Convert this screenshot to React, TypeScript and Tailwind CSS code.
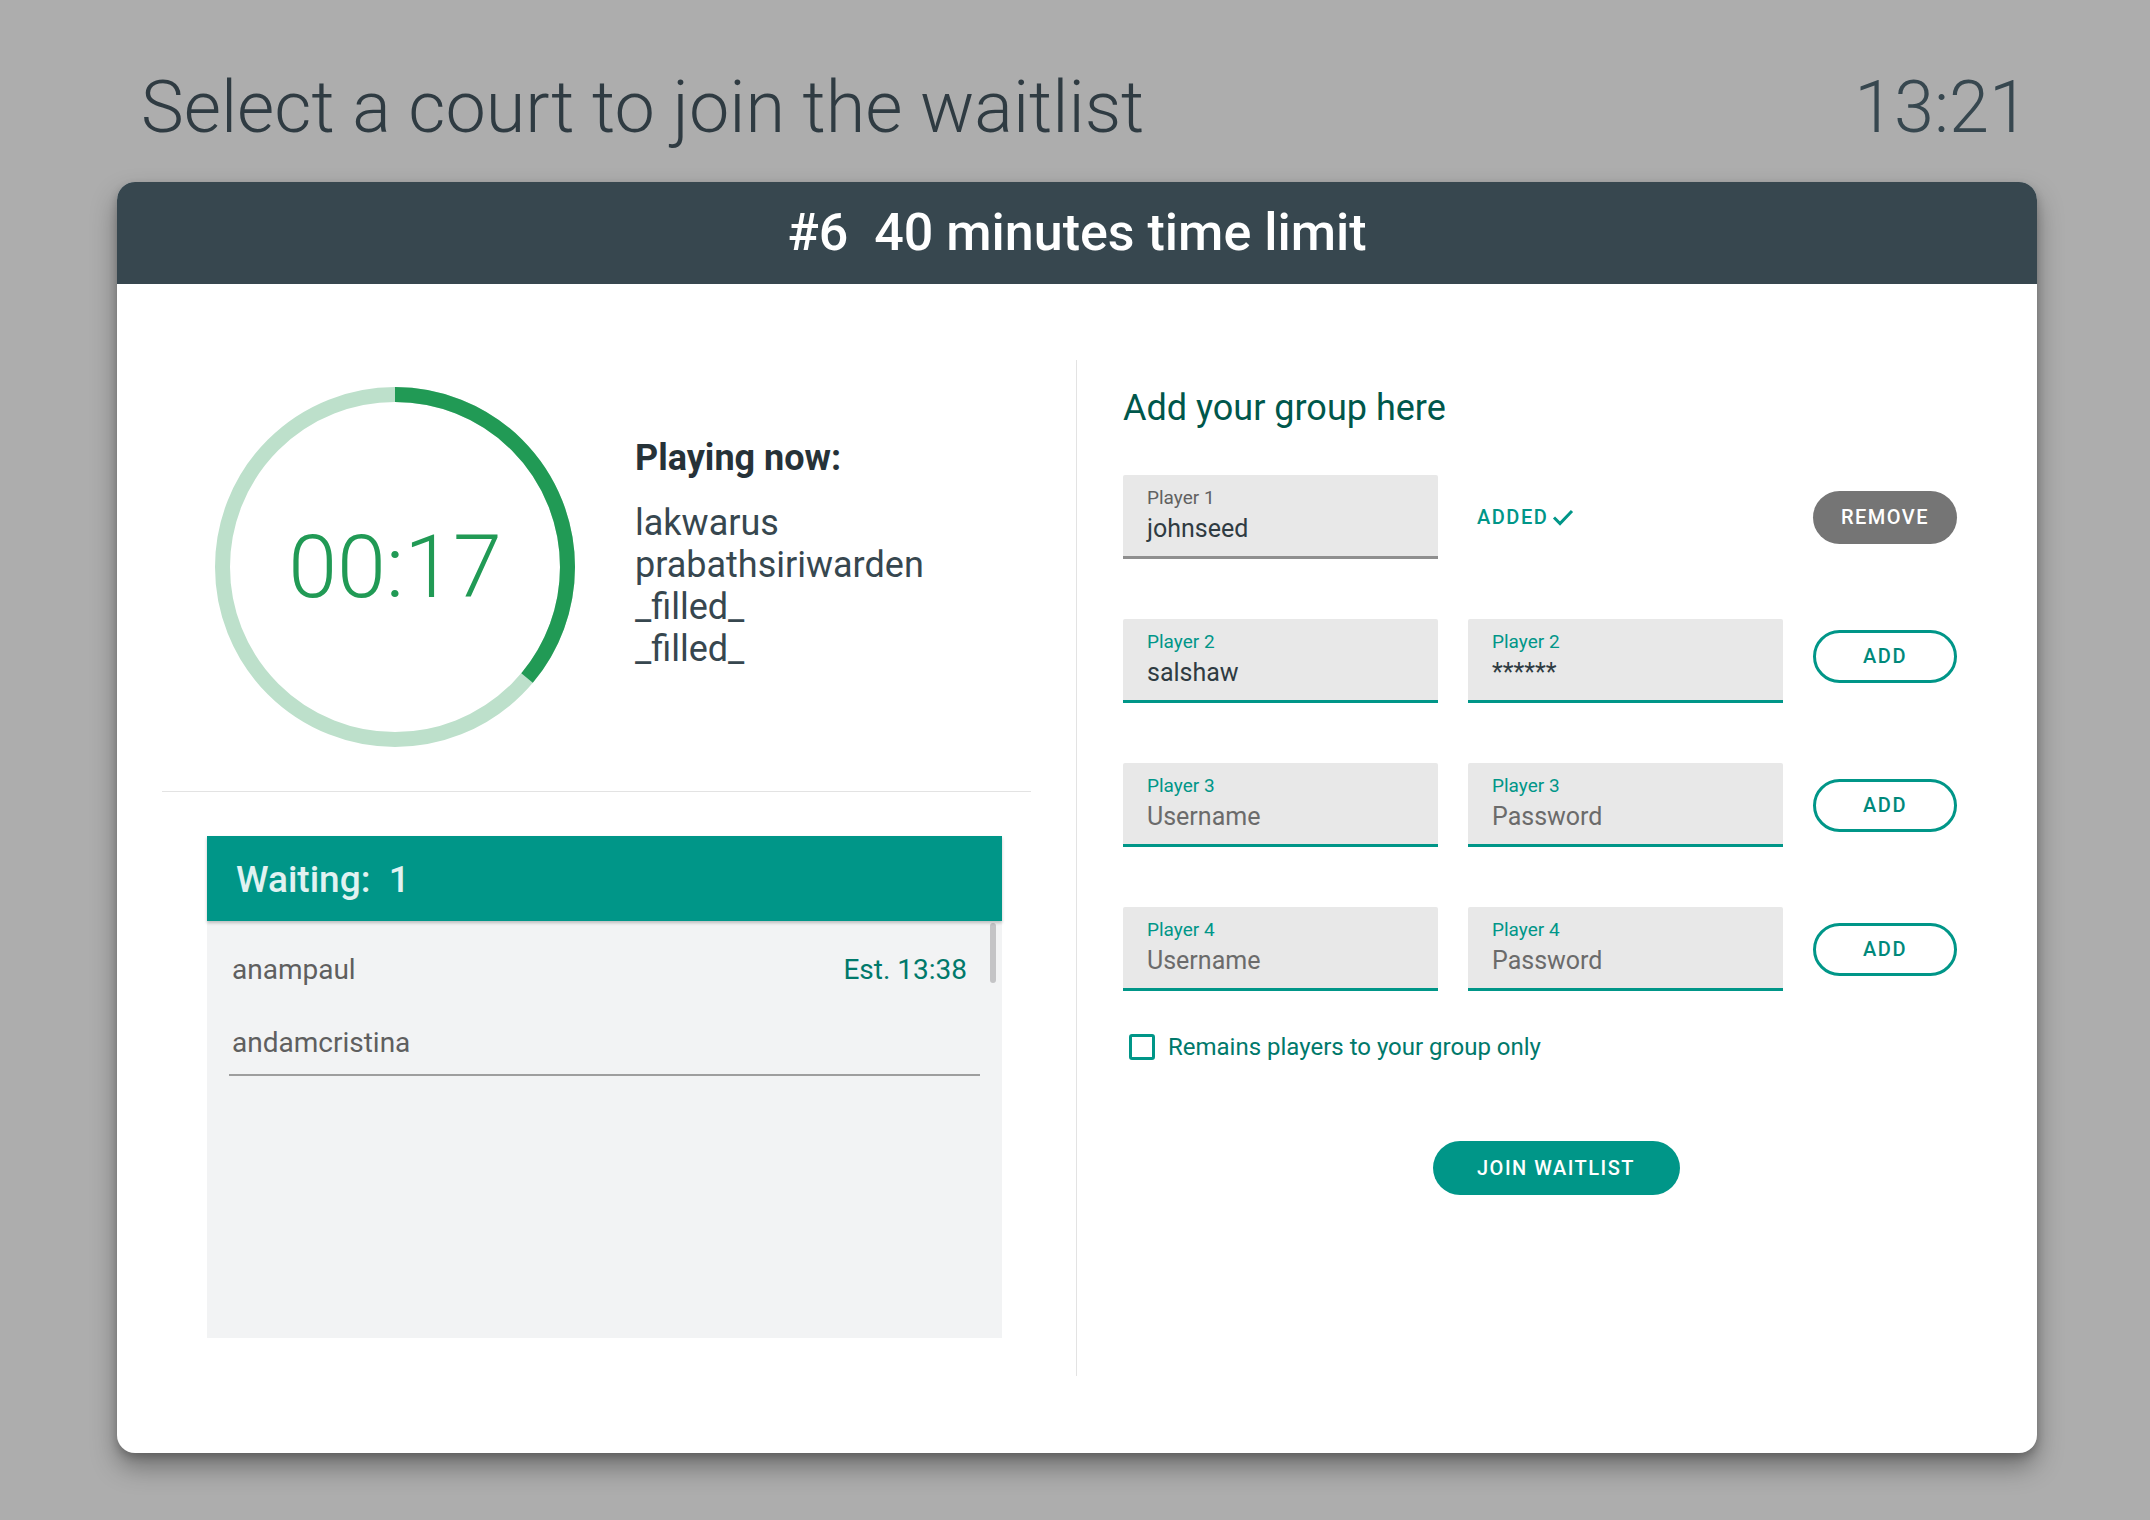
import React from 'react';

const TEAL = '#009688';

const TimerRing: React.FC<{ fraction: number; label: string }> = ({ fraction, label }) => {
  const r = 172.5;
  const c = 2 * Math.PI * r;
  return (
    <div className="relative w-[360px] h-[360px] shrink-0">
      <svg width="360" height="360" viewBox="0 0 360 360">
        <circle cx="180" cy="180" r={r} fill="none" stroke="#bde0cb" strokeWidth="15" />
        <circle
          cx="180"
          cy="180"
          r={r}
          fill="none"
          stroke="#219a55"
          strokeWidth="15"
          strokeDasharray={`${c * fraction} ${c}`}
          transform="rotate(-90 180 180)"
        />
      </svg>
      <div className="absolute inset-0 flex items-center justify-center">
        <span className="text-[88px] leading-none font-light text-[#219a55]">{label}</span>
      </div>
    </div>
  );
};

const Field: React.FC<{ label: string; value?: string; placeholder?: string; disabled?: boolean }> = ({
  label,
  value,
  placeholder,
  disabled,
}) => (
  <div
    className={`h-[84px] bg-[#e8e8e8] rounded-t-[2px] border-b-[3px] pl-[24px] pt-[12px] ${
      disabled ? 'border-[#8f8f8f]' : 'border-[#009688]'
    }`}
  >
    <div className={`text-[19px] leading-[22px] ${disabled ? 'text-[#616161]' : 'text-[#009688]'}`}>{label}</div>
    <div className="mt-[5px] text-[25px] leading-[30px]">
      {value ? (
        <span className="text-[#2f3b42]">{value}</span>
      ) : (
        <span className="text-[#6b6b6b]">{placeholder}</span>
      )}
    </div>
  </div>
);

const OutlineButton: React.FC<{ children: React.ReactNode; lifted?: boolean }> = ({ children, lifted }) => (
  <button
    className={`w-[144px] h-[53px] rounded-full border-[3px] border-[#009688] text-[#00897b] text-[20px] font-medium tracking-[1.5px] ${
      lifted ? 'mb-[10px]' : ''
    }`}
  >
    {children}
  </button>
);

const App: React.FC = () => {
  const players = [
    { n: 2, user: 'salshaw', pass: '******' },
    { n: 3 },
    { n: 4 },
  ];

  return (
    <div className="min-h-screen w-full bg-[#adadad] font-['Roboto',sans-serif] pt-[72px] pb-[68px]">
      {/* page title */}
      <div className="flex items-start justify-between pl-[141px] pr-[121px]">
        <h1 className="text-[72px] leading-none font-light text-[#2f3b42]">Select a court to join the waitlist</h1>
        <span className="text-[72px] leading-none font-light text-[#37474f]">13:21</span>
      </div>

      {/* court card */}
      <div className="ml-[117px] mt-[38px] w-[1920px] rounded-[18px] overflow-hidden bg-white shadow-[0_14px_26px_rgba(0,0,0,0.35),0_4px_8px_rgba(0,0,0,0.2)]">
        <div className="h-[102px] bg-[#37474f] flex items-center justify-center">
          <h2 className="text-[52px] font-medium text-white whitespace-pre">#6  40 minutes time limit</h2>
        </div>

        <div className="flex pt-[76px] pb-[77px] pl-[45px] pr-[80px]">
          {/* left side */}
          <div className="w-[869px] h-[1016px] shrink-0">
            <div className="flex items-start pt-[27px] pl-[53px] pb-[44px]">
              <TimerRing fraction={130 / 360} label="00:17" />
              <div className="ml-[60px] mt-[51px]">
                <div className="text-[36px] leading-[40px] font-bold text-[#263238]">Playing now:</div>
                <div className="mt-[24px] text-[36px] leading-[42px] text-[#37474f]">
                  <div>lakwarus</div>
                  <div>prabathsiriwarden</div>
                  <div>_filled_</div>
                  <div>_filled_</div>
                </div>
              </div>
            </div>
            <div className="h-px bg-[#e3e3e3]" />

            <div className="ml-[45px] mt-[44px] w-[795px]">
              <div className="relative z-10 h-[85px] bg-[#009688] flex items-center pl-[29px] shadow-[0_2px_3px_rgba(0,0,0,0.22)]">
                <span className="mt-[3px] text-[37px] font-medium text-[#e0f2f1] whitespace-pre">Waiting:  1</span>
              </div>
              <div className="relative h-[417px] bg-[#f2f3f4] px-[22px] pt-[33px]">
                <div className="flex justify-between pl-[3px] pr-[13px] text-[28px] leading-[32px]">
                  <span className="text-[#5f5f5f]">anampaul</span>
                  <span className="text-[#00796b]">Est. 13:38</span>
                </div>
                <div className="mt-[41px] pl-[3px] pb-[15px] border-b-2 border-[#9e9e9e] text-[28px] leading-[32px] text-[#5f5f5f]">
                  andamcristina
                </div>
                <div className="absolute right-[6px] top-[2px] w-[6px] h-[60px] rounded-full bg-[#c4c4c6]" />
              </div>
            </div>
          </div>

          {/* divider */}
          <div className="ml-[45px] mr-[46px] w-px bg-[#e3e3e3] shrink-0" />

          {/* right side */}
          <div className="flex-1 pt-[28px]">
            <h3 className="text-[36px] leading-[40px] text-[#00574b]">Add your group here</h3>

            <div className="mt-[47px] grid grid-cols-[315px_315px_144px] gap-x-[30px] gap-y-[60px] items-center">
              <Field label="Player 1" value="johnseed" disabled />
              <div className="pl-[9px] flex items-center gap-[4px] text-[20px] font-medium tracking-[1.5px] text-[#009688]">
                ADDED
                <svg width="22" height="18" viewBox="0 0 22 18" fill="none">
                  <path d="M2 9.5 L8 15.5 L20 3" stroke={TEAL} strokeWidth="3" />
                </svg>
              </div>
              <button className="w-[144px] h-[53px] rounded-full bg-[#757575] text-white text-[20px] font-medium tracking-[1.5px]">
                REMOVE
              </button>

              {players.map((p) => (
                <React.Fragment key={p.n}>
                  <Field label={`Player ${p.n}`} value={p.user} placeholder="Username" />
                  <Field label={`Player ${p.n}`} value={p.pass} placeholder="Password" />
                  <OutlineButton lifted={p.n === 2}>ADD</OutlineButton>
                </React.Fragment>
              ))}
            </div>

            <label className="mt-[42px] ml-[6px] flex items-center">
              <span className="w-[26px] h-[26px] rounded-[3px] border-[3px] border-[#009688] bg-white" />
              <span className="ml-[13px] text-[24px] leading-[28px] text-[#00796b]">Remains players to your group only</span>
            </label>

            <div className="mt-[80px] flex justify-center pl-[32px]">
              <button className="w-[247px] h-[54px] rounded-full bg-[#009688] text-white text-[20px] font-medium tracking-[1.5px]">
                JOIN WAITLIST
              </button>
            </div>
          </div>
        </div>
      </div>
    </div>
  );
};

export default App;
